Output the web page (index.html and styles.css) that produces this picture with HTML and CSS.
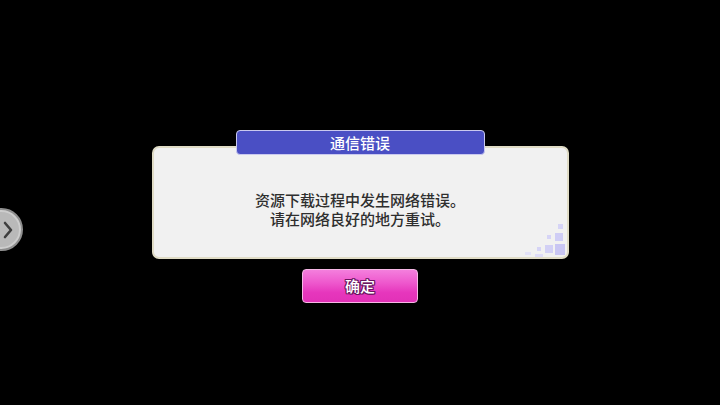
FILE: index.html
```html
<!DOCTYPE html>
<html lang="zh-CN">
<head>
<meta charset="utf-8">
<link rel="stylesheet" href="styles.css">
</head>
<body>
<div class="side-btn">
  <svg width="12" height="18" viewBox="0 0 12 18"><path d="M3 2 L9 9 L3 16" fill="none" stroke="#3e3e3e" stroke-width="2.6" stroke-linecap="round" stroke-linejoin="round"/></svg>
</div>
<div class="stage">
  <div class="tab">通信错误</div>
  <div class="dialog">
    <p class="msg">资源下载过程中发生网络错误。<br>请在网络良好的地方重试。</p>
    <div class="deco">
      <span class="sq s1"></span><span class="sq s2"></span><span class="sq s3"></span>
      <span class="sq s4"></span><span class="sq s5"></span><span class="sq s6"></span>
      <span class="sq s7"></span><span class="sq s8"></span>
    </div>
  </div>
  <div class="ok">确定</div>
</div>
</body>
</html>
```
FILE: styles.css
```css
html, body {
  margin: 0;
  padding: 0;
  width: 720px;
  height: 405px;
  background: #000;
  overflow: hidden;
  font-family: "Noto Sans CJK SC", "Noto Sans", sans-serif;
}
.side-btn {
  position: absolute;
  left: -20px;
  top: 208px;
  width: 43px;
  height: 43px;
  box-sizing: border-box;
  border-radius: 50%;
  background: #b9b9b9;
  border: 2px solid #8e8e8e;
  box-shadow: inset 0 0 0 2px #cdcdcd;
  display: flex;
  align-items: center;
  justify-content: flex-end;
  padding-right: 7px;
}
.stage {
  display: flex;
  flex-direction: column;
  align-items: center;
  padding-top: 130px;
}
.tab {
  position: relative;
  z-index: 2;
  width: 247px;
  height: 23px;
  background: #4a4fc4;
  border: 1px solid #c9c9ef;
  border-radius: 4px;
  color: #fff;
  font-size: 15px;
  font-weight: 500;
  line-height: 23px;
  text-align: center;
  margin-bottom: -9px;
}
.dialog {
  position: relative;
  width: 413px;
  height: 109px;
  background: #f1f1f1;
  border: 2px solid #e0dcc6;
  border-radius: 7px;
  overflow: hidden;
}
.msg {
  margin: 0;
  padding-top: 42px;
  text-align: center;
  font-size: 15px;
  font-weight: 500;
  line-height: 19px;
  color: #2e2e2e;
}
.deco {
  position: absolute;
  right: 0;
  bottom: 0;
  width: 46px;
  height: 40px;
}
.sq {
  position: absolute;
  background: #d6d4f6;
}
.s1 { right: 4px; bottom: 28px; width: 5px; height: 5px; }
.s2 { right: 4px; bottom: 16px; width: 8px; height: 8px; background: #cfcdf5; }
.s3 { right: 16px; bottom: 18px; width: 4px; height: 4px; }
.s4 { right: 2px; bottom: 2px; width: 10px; height: 11px; background: #c9c6f3; }
.s5 { right: 14px; bottom: 4px; width: 8px; height: 8px; background: #d2d0f5; }
.s6 { right: 26px; bottom: 6px; width: 4px; height: 4px; }
.s7 { right: 36px; bottom: 2px; width: 6px; height: 3px; background: #e2e1f7; }
.s8 { right: 24px; bottom: 0px; width: 8px; height: 3px; background: #dedcf7; }
.ok {
  margin-top: 10px;
  width: 114px;
  height: 32px;
  border: 1px solid #f6b8e6;
  border-radius: 4px;
  background: linear-gradient(#f47fdd 0%, #ee58cd 40%, #e637bd 70%, #e231b7 100%);
  color: #fff;
  font-size: 15px;
  font-weight: 500;
  line-height: 32px;
  text-align: center;
  text-shadow: 1px 0 0 #6a1460, -1px 0 0 #6a1460, 0 1px 0 #6a1460, 0 -1px 0 #6a1460, 1px 1px 0 #6a1460, -1px -1px 0 #6a1460, 1px -1px 0 #6a1460, -1px 1px 0 #6a1460;
}
```
